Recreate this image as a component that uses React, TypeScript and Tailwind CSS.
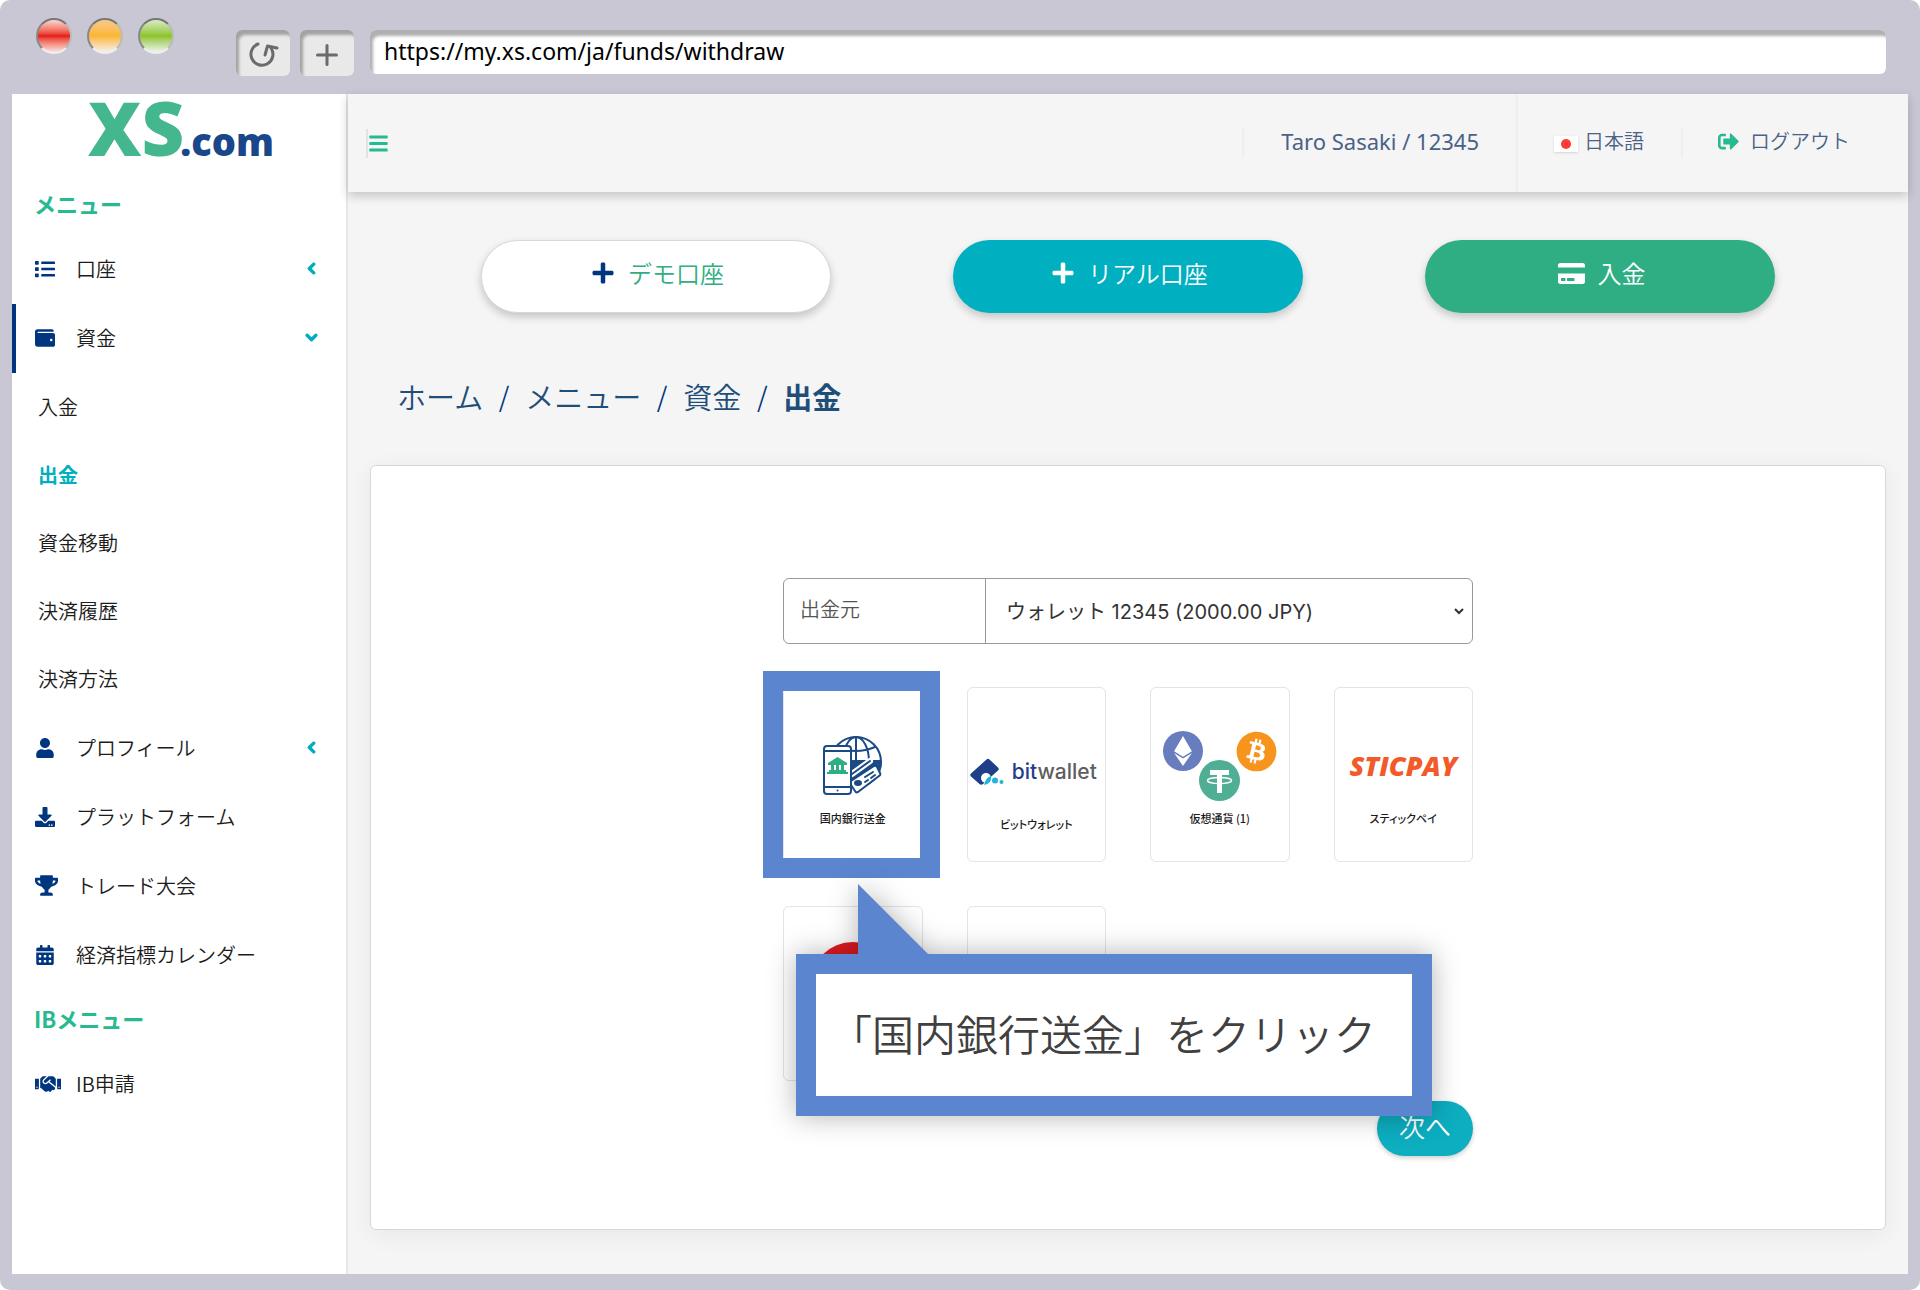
import type { ReactNode } from "react";
import type { IconType } from "react-icons";
import {
  FaBars,
  FaBitcoin,
  FaCalendarAlt,
  FaChevronDown,
  FaChevronLeft,
  FaCreditCard,
  FaDownload,
  FaEthereum,
  FaHandshake,
  FaList,
  FaPlus,
  FaSignOutAlt,
  FaTrophy,
  FaUser,
  FaWallet,
} from "react-icons/fa";

type MenuEntry = {
  label: string;
  icon: IconType;
  iconSize?: number;
  state?: "open" | "closed";
  children?: string[];
};

const MAIN_MENU: MenuEntry[] = [
  { label: "口座", icon: FaList, state: "closed" },
  {
    label: "資金",
    icon: FaWallet,
    state: "open",
    children: ["入金", "出金", "資金移動", "決済履歴", "決済方法"],
  },
  { label: "プロフィール", icon: FaUser, state: "closed" },
  { label: "プラットフォーム", icon: FaDownload },
  { label: "トレード大会", icon: FaTrophy, iconSize: 23 },
  { label: "経済指標カレンダー", icon: FaCalendarAlt },
];

const IB_MENU: MenuEntry[] = [{ label: "IB申請", icon: FaHandshake, iconSize: 26 }];

const CURRENT_PAGE = "出金";

function TrafficLight({ color }: { color: string }) {
  return (
    <span
      className={`h-9 w-9 rounded-full border-2 border-t-[#777] border-l-[#888] border-r-[#bbb] border-b-[#eee] bg-linear-to-b ${color}`}
    />
  );
}

function ChromeButton({ label, children }: { label: string; children: ReactNode }) {
  return (
    <button
      aria-label={label}
      className="flex h-[46px] w-[54px] items-center justify-center rounded-md bg-[#e9e9e9] pt-1 text-[#6b6b6b] shadow-[inset_3px_5px_3px_#a3a3a3]"
    >
      {children}
    </button>
  );
}

function BrowserBar() {
  return (
    <div className="flex h-[94px] shrink-0 items-start pt-[18px] pr-[22px] pl-6">
      <div className="flex gap-[15px]">
        <TrafficLight color="from-[#f6d8d4] via-[#e5161a] to-[#f3e4e2]" />
        <TrafficLight color="from-[#f9c98a] via-[#fab62e] to-[#f6f0e6]" />
        <TrafficLight color="from-[#d9ecc2] via-[#90c31f] to-[#eff3ea]" />
      </div>
      <div className="mt-3 ml-[62px] flex flex-1 gap-[10px]">
        <ChromeButton label="再読み込み">
          <svg width="32" height="28" viewBox="0 0 32 28" fill="none" stroke="currentColor" strokeWidth="3" strokeLinecap="round" strokeLinejoin="round">
            <path d="M11 3 A11 11 0 1 0 24 7" />
            <path d="M18 14 L20.500 5 L30 7" />
          </svg>
        </ChromeButton>
        <ChromeButton label="新しいタブ">
          <svg width="22" height="22" viewBox="0 0 22 22" stroke="currentColor" strokeWidth="3" strokeLinecap="round">
            <path d="M11 1.500 V20.500 M1.500 11 H20.500" />
          </svg>
        </ChromeButton>
        <input
          type="text"
          aria-label="アドレス"
          defaultValue="https://my.xs.com/ja/funds/withdraw"
          className="ml-[6px] h-11 flex-1 rounded-md bg-white pb-[2px] pl-[14px] font-['Noto_Sans',sans-serif] text-[23px] font-normal text-black shadow-[inset_3px_6px_3px_#b0b0b0]"
        />
      </div>
    </div>
  );
}

function Logo() {
  return (
    <a
      href="#"
      className="flex h-[81px] items-baseline pl-[76px] font-['Open_Sans',sans-serif] font-extrabold"
    >
      <span className="text-[74px] leading-[68px] text-[#45b78f]">XS</span>
      <span className="-ml-1 text-[38px] leading-[68px] text-[#1a4789]">.com</span>
    </a>
  );
}

function MenuHeading({ children }: { children: ReactNode }) {
  return (
    <h2 className="flex h-[60px] items-center pb-1 pl-[22px] text-[22px] font-bold text-[#27ba90]">
      {children}
    </h2>
  );
}

function MenuItem({ entry }: { entry: MenuEntry }) {
  const Icon = entry.icon;
  const open = entry.state === "open";
  return (
    <li>
      <a
        href="#"
        className={`flex h-[69px] items-center border-l-4 pr-[28px] pb-[2px] pl-[19px] ${
          open ? "border-[#003580]" : "border-transparent"
        }`}
      >
        <span className="w-[41px] shrink-0 text-[#003580]">
          <Icon size={entry.iconSize ?? 20} />
        </span>
        <span className="flex-1">{entry.label}</span>
        {entry.state === "closed" && (
          <FaChevronLeft size={13} stroke="currentColor" strokeWidth={50} className="text-[#00adbd]" />
        )}
        {open && <FaChevronDown size={13} stroke="currentColor" strokeWidth={50} className="text-[#00adbd]" />}
      </a>
      {entry.children && (
        <ul className="pb-px">
          {entry.children.map((child) => (
            <li key={child}>
              <a
                href="#"
                className={`flex h-[68px] items-center pl-[26px] ${
                  child === CURRENT_PAGE ? "font-bold text-[#00b0be]" : ""
                }`}
              >
                {child}
              </a>
            </li>
          ))}
        </ul>
      )}
    </li>
  );
}

function Sidebar() {
  return (
    <nav className="w-[336px] shrink-0 border-r-2 border-[#e6e6ea] bg-white text-[20px] text-[#1c1c1c]">
      <Logo />
      <MenuHeading>メニュー</MenuHeading>
      <ul>
        {MAIN_MENU.map((entry) => (
          <MenuItem key={entry.label} entry={entry} />
        ))}
      </ul>
      <MenuHeading>IBメニュー</MenuHeading>
      <ul>
        {IB_MENU.map((entry) => (
          <MenuItem key={entry.label} entry={entry} />
        ))}
      </ul>
    </nav>
  );
}

function TopBar() {
  return (
    <header className="flex h-[98px] shrink-0 items-center bg-[#f5f5f5] text-[20px] text-[#4a6285] shadow-[0_4px_10px_rgba(0,0,0,0.2)]">
      <button aria-label="メニューを開閉" className="ml-[18px] border-l-2 border-[#e2e2e2] py-1 text-[#27ba90]">
        <FaBars size={21} />
      </button>
      <div className="ml-auto flex h-[30px] items-center border-l-2 border-[#eeeeee] pr-[37px] pb-1 pl-[37px] font-['Noto_Sans',sans-serif] text-[22px] font-normal">
        Taro Sasaki / 12345
      </div>
      <div className="flex h-full items-center border-l-2 border-[#eeeeee]">
        <button className="flex items-center gap-[6px] pr-[37px] pb-[4px] pl-[36px]">
          <span className="mt-[6px] flex h-4 w-6 items-center justify-center bg-white shadow">
            <span className="h-[10px] w-[10px] rounded-full bg-[#ff3a34]" />
          </span>
          日本語
        </button>
      </div>
      <a href="#" className="flex h-[30px] items-center gap-[11px] border-l-2 border-[#eeeeee] pr-[58px] pb-[4px] pl-[35px]">
        <FaSignOutAlt size={21} className="text-[#27ba90]" />
        ログアウト
      </a>
    </header>
  );
}

function ActionButton({ className, icon, label }: { className: string; icon: ReactNode; label: string }) {
  return (
    <button
      className={`flex h-[73px] w-[350px] items-center justify-center gap-[13px] rounded-full pb-[7px] pl-[3px] text-[24px] shadow-[0_4px_8px_rgba(0,0,0,0.2)] ${className}`}
    >
      {icon}
      {label}
    </button>
  );
}

function Breadcrumb() {
  const parents = ["ホーム", "メニュー", "資金"];
  return (
    <nav aria-label="パンくず" className="mt-[62px] ml-[27px]">
      <ol className="flex items-center text-[29px] leading-[42px] text-[#1f4e79]">
        {parents.map((name) => (
          <li key={name} className="flex items-center">
            <a href="#">{name}</a>
            <span className="w-[42px] text-center text-[27px] text-[#003580]">/</span>
          </li>
        ))}
        <li className="font-bold">{CURRENT_PAGE}</li>
      </ol>
    </nav>
  );
}

function BankLogo() {
  return (
    <svg width="60" height="62" viewBox="0 0 60 62" fill="none" stroke="#1b4a86" strokeWidth="2" strokeLinecap="round" strokeLinejoin="round">
      <circle cx="33" cy="27" r="25" />
      <ellipse cx="33" cy="27" rx="13" ry="25" />
      <path d="M33 2 V40 M14 12 Q33 20 52 12 M9 26 H58" />
      <path d="M28 27 H58 Q57 36 52 44 L30 50 Z" fill="#1b4a86" />
      <path d="M29 39 L47 26" stroke="#fff" strokeWidth="6" />
      <path d="M29 39 L47 26" />
      <path d="M28 46 L51 31 Q53 30 54 32 L57 38 Q58 40 56 41 L35 57 Q33 58 32 56 L28 50 Z" fill="#fff" />
      <path d="M42 42 L50 37 M42 47 L45 45 M48 43 L52 40" />
      <ellipse cx="35" cy="48" rx="3" ry="2" fill="#1b4a86" />
      <rect x="1" y="11" width="27" height="48" rx="3" fill="#fff" />
      <path d="M1 16 H28 M1 52 H28" />
      <circle cx="14.500" cy="55.500" r="1" fill="#1b4a86" stroke="none" />
      <g fill="#2fae84" stroke="none">
        <path d="M5 28 L14.500 22 L24 28 V30 H5 Z" />
        <path d="M8 30 h3 v6 h-3 Z M13 30 h3 v6 h-3 Z M18 30 h3 v6 h-3 Z" />
        <path d="M6 35 H23 V37 H25 V39 H4 V37 H6 Z" />
      </g>
    </svg>
  );
}

function BitwalletLogo() {
  return (
    <span className="flex items-center gap-2 pr-[6px]">
      <svg width="34" height="28" viewBox="0 0 34 28">
        <path d="M16.500 1.500 Q18 0 19.500 1.500 L28 9.500 Q29.500 11 28 12.500 L13 26 Q11 27.500 9.500 26 L1 18.500 Q-0.500 17 1 15.500 Z" fill="#1f3f8a" />
        <circle cx="16" cy="20" r="5" fill="#fff" />
        <path d="M14 27 Q22 26 21 18 Q16 19 14 27 Z" fill="#21b3dc" />
        <circle cx="25" cy="22.500" r="3" fill="#21b3dc" />
        <circle cx="31.500" cy="24" r="2" fill="#21b3dc" />
      </svg>
      <span className="font-['Inter',sans-serif] text-[21px] leading-6 font-medium text-[#5e5e60]">
        <span className="text-[#1f3f8a]">bit</span>wallet
      </span>
    </span>
  );
}

function CryptoLogo() {
  return (
    <span className="flex items-start">
      <span className="flex h-10 w-10 items-center justify-center rounded-full bg-[#687dbd] text-white">
        <FaEthereum size={30} />
      </span>
      <svg width="41" height="41" viewBox="0 0 41 41" className="-mx-1 mt-[29px]">
        <circle cx="20.500" cy="20.500" r="20.500" fill="#50ae94" />
        <path d="M11 10 H30 V15 H23 V33 H18 V15 H11 Z" fill="#fff" />
        <ellipse cx="20.500" cy="20.500" rx="12" ry="3" fill="none" stroke="#fff" strokeWidth="1.500" />
      </svg>
      <FaBitcoin size={41} className="text-[#f7941d]" />
    </span>
  );
}

function MethodCard({ logo, label, lowered }: { logo: ReactNode; label: string; lowered?: boolean }) {
  return (
    <button
      className={`flex h-[175px] w-full flex-col items-center rounded-md border border-[#e4e4e8] bg-white text-[11px] leading-4 font-medium text-[#1c1c1c] [font-feature-settings:'palt'] ${
        lowered ? "pt-[6px]" : ""
      }`}
    >
      <span className="flex h-[122px] shrink-0 items-center pt-[34px]">{logo}</span>
      {label}
    </button>
  );
}

function WithdrawForm() {
  return (
    <form className="relative mx-auto w-[690px]">
      <div className="flex h-[66px] rounded-md border border-[#999] text-[20px]">
        <label htmlFor="source" className="flex w-[202px] items-center border-r border-[#999] pb-1 pl-4 text-[#555]">
          出金元
        </label>
        <select
          id="source"
          className="mr-[5px] flex-1 bg-white pt-[2px] pl-4 font-['Inter','Noto_Sans_CJK_JP',sans-serif] font-normal text-[#333]"
        >
          <option>ウォレット 12345 (2000.00 JPY)</option>
        </select>
      </div>

      <div className="mt-[43px] grid grid-cols-4 gap-11">
        <div className="relative">
          <MethodCard logo={<BankLogo />} label="国内銀行送金" />
          <div className="pointer-events-none absolute -inset-y-4 -right-[17px] -left-5 border-[20px] border-[#5b86cf]" />
        </div>
        <MethodCard logo={<BitwalletLogo />} label="ビットウォレット" lowered />
        <MethodCard logo={<CryptoLogo />} label="仮想通貨 (1)" />
        <MethodCard
          logo={
            <span className="font-['Open_Sans',sans-serif] text-[27px] leading-8 font-extrabold text-[#f35a29] italic">
              STICPAY
            </span>
          }
          label="スティックペイ"
        />
        <MethodCard logo={<span className="h-[86px] w-[86px] rounded-full bg-[#e31b20]" />} label="" />
        <MethodCard logo={null} label="" />
      </div>

      <div className="mt-5 flex justify-end">
        <button
          type="button"
          className="h-[55px] w-[96px] rounded-full bg-[#0caec0] pb-[6px] text-[26px] text-white shadow-[0_2px_5px_rgba(0,0,0,0.2)]"
        >
          次へ
        </button>
      </div>

      {/* Guide balloon over the method grid */}
      <div className="absolute top-[376px] left-[13px] w-[636px] border-[20px] border-[#5b86cf] bg-white drop-shadow-[0_0_14px_rgba(0,0,0,0.3)]">
        <svg width="70" height="70" viewBox="0 0 70 70" className="absolute -top-[90px] left-[42px]">
          <path d="M0 0 L70 70 H0 Z" fill="#5b86cf" />
        </svg>
        <p className="pb-[4px] pl-[14px] text-[42px] leading-[118px] whitespace-nowrap text-[#404040]">
          「国内銀行送金」をクリック
        </p>
      </div>
    </form>
  );
}

export default function App() {
  return (
    <div className="bg-white font-['Noto_Sans_CJK_JP',sans-serif] font-[350]">
      <div className="flex min-h-screen flex-col rounded-[10px] bg-[#c8c7d3] px-3 pb-4">
        <BrowserBar />
        <div className="flex flex-1 bg-[#f5f5f5]">
          <Sidebar />
          <div className="flex min-w-0 flex-1 flex-col">
            <TopBar />
            <main className="flex flex-1 flex-col px-[22px] pt-12 pb-11">
              <div className="grid grid-cols-3 justify-items-center px-[50px]">
                <ActionButton
                  className="border border-[#d5d6e2] bg-white text-[#2fae84]"
                  icon={<FaPlus size={24} className="text-[#003580]" />}
                  label="デモ口座"
                />
                <ActionButton className="bg-[#00afc0] text-white" icon={<FaPlus size={24} />} label="リアル口座" />
                <ActionButton className="bg-[#2fae84] text-white" icon={<FaCreditCard size={27} />} label="入金" />
              </div>
              <Breadcrumb />
              <section className="mt-[48px] flex-1 rounded-md border border-[#d5d7e0] bg-white pt-[112px] pb-[73px] shadow-[0_5px_24px_rgba(0,0,0,0.06)]">
                <WithdrawForm />
              </section>
            </main>
          </div>
        </div>
      </div>
    </div>
  );
}
